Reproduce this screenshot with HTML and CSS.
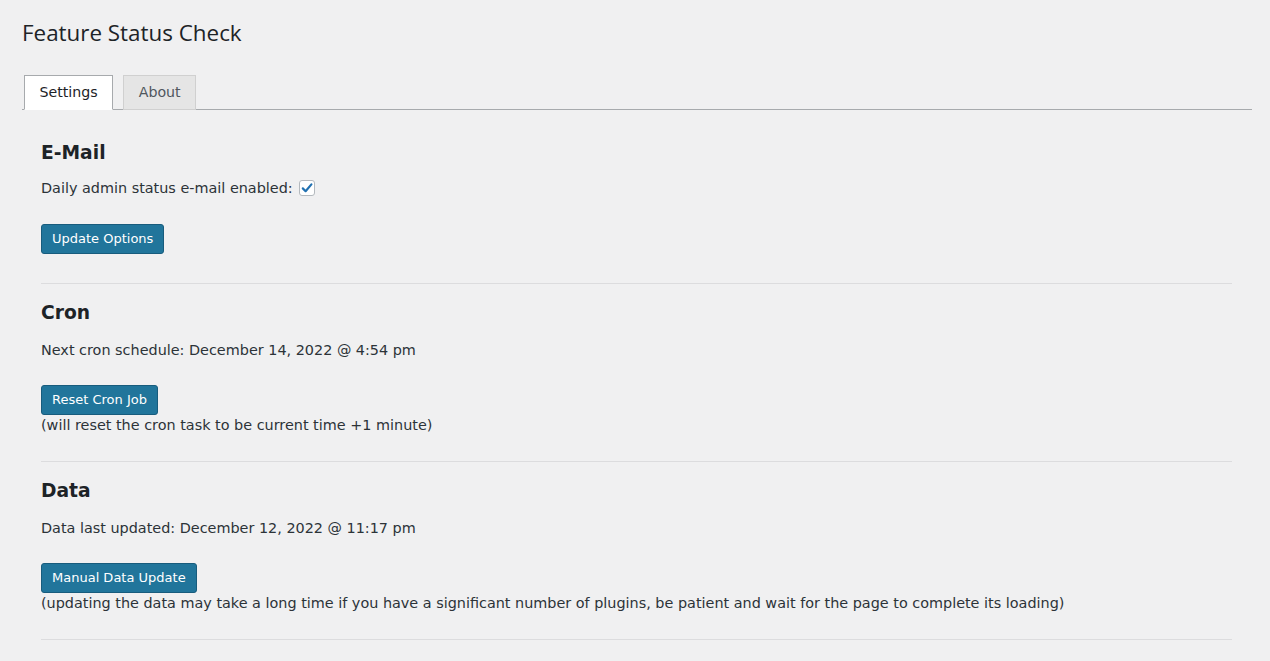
FILE: index.html
```html
<!DOCTYPE html>
<html lang="en">
<head>
<meta charset="utf-8">
<title>Feature Status Check</title>
<link rel="stylesheet" href="styles.css">
</head>
<body>
<div class="wrap">
  <h1 class="title">Feature Status Check</h1>
  <nav class="tabs">
    <a class="tab active">Settings</a>
    <a class="tab">About</a>
  </nav>
  <div class="panel">
    <section class="block first">
      <h2 class="head">E-Mail</h2>
      <p class="line">Daily admin status e-mail enabled: <span class="check"><svg width="12" height="12" viewBox="0 0 12 12"><path d="M1.8 6.4 L4.6 9.2 L10.4 2.4" fill="none" stroke="#2271b1" stroke-width="2.2" stroke-linecap="round" stroke-linejoin="round"/></svg></span></p>
      <div><button class="btn">Update Options</button></div>
    </section>
    <section class="block">
      <h2 class="head">Cron</h2>
      <p class="line">Next cron schedule: December 14, 2022 @ 4:54 pm</p>
      <div><button class="btn">Reset Cron Job</button></div>
      <div class="note">(will reset the cron task to be current time +1 minute)</div>
    </section>
    <section class="block">
      <h2 class="head">Data</h2>
      <p class="line">Data last updated: December 12, 2022 @ 11:17 pm</p>
      <div><button class="btn">Manual Data Update</button></div>
      <div class="note">(updating the data may take a long time if you have a significant number of plugins, be patient and wait for the page to complete its loading)</div>
    </section>
  </div>
</div>
</body>
</html>
```
FILE: styles.css
```css
html, body {
  margin: 0;
  padding: 0;
  background: #f0f0f1;
}
body {
  font-family: "DejaVu Sans", Verdana, sans-serif;
  font-size: 14.4px;
  color: #2c3338;
}
.wrap {
  padding: 0 18px 0 22px;
}
.title {
  margin: 0;
  padding-top: 18px;
  font-family: "Open Sans", "DejaVu Sans", sans-serif;
  font-size: 22.4px;
  font-weight: 400;
  line-height: 30px;
  color: #1d2327;
}
.tabs {
  display: flex;
  gap: 10px;
  margin-top: 27px;
  padding-left: 2px;
  border-bottom: 1px solid #a7aaad;
}
.tab {
  display: block;
  padding: 7px 14.5px;
  line-height: 19px;
  margin-bottom: -1px;
  border: 1px solid #d0d0d0;
  background: #e5e5e5;
  color: #50575e;
  font-size: 14.2px;
}
.tab.active {
  background: #fff;
  color: #1d2327;
  border-color: #a7aaad;
  border-bottom-color: #fff;
}
.panel {
  padding: 14px 20px 0 19px;
}
.block {
  padding: 16px 0 26px;
  border-bottom: 1px solid #dcdcde;
}
.block.first {
  padding-bottom: 29px;
}
.head {
  margin: 0 0 14px;
  font-size: 18.7px;
  line-height: 26px;
  font-weight: 700;
  color: #1d2327;
}
.block.first .head {
  margin-bottom: 12px;
}
.line {
  margin: 0 0 25px;
  line-height: 20px;
  display: flex;
  align-items: center;
  gap: 6px;
}
.block.first .line {
  margin-bottom: 26px;
}
.check {
  display: inline-flex;
  align-items: center;
  justify-content: center;
  width: 14px;
  height: 14px;
  background: #fff;
  border: 1px solid #b4b9be;
  border-radius: 3px;
}
.btn {
  display: block;
  height: 30px;
  padding: 0 10px;
  margin: 0;
  font-family: "DejaVu Sans", Verdana, sans-serif;
  font-size: 13px;
  line-height: 28px;
  color: #fff;
  background: #21759b;
  border: 1px solid #185c7d;
  border-radius: 3px;
}
.note {
  line-height: 20px;
}
```
